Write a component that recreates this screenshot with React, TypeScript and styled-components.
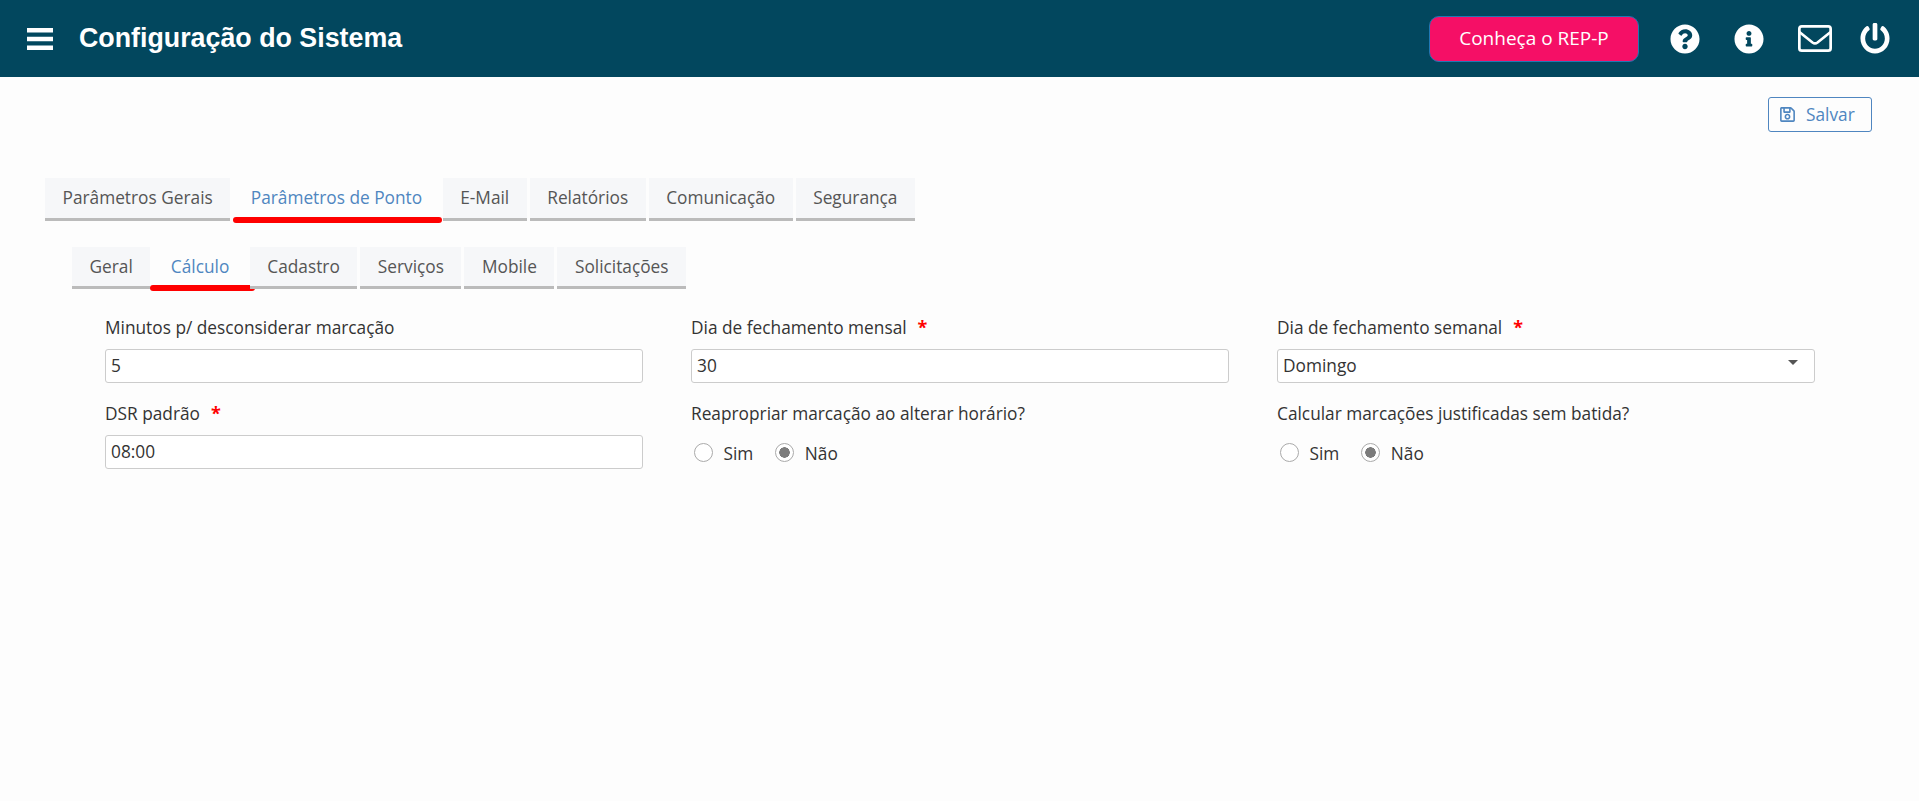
import styled, { createGlobalStyle } from "styled-components";
import { FaInfoCircle, FaPowerOff, FaQuestionCircle, FaRegSave } from "react-icons/fa";

const mainTabs = [
  "Parâmetros Gerais",
  "Parâmetros de Ponto",
  "E-Mail",
  "Relatórios",
  "Comunicação",
  "Segurança",
];

const subTabs = ["Geral", "Cálculo", "Cadastro", "Serviços", "Mobile", "Solicitações"];

const GlobalStyle = createGlobalStyle`
  html, body {
    margin: 0;
    height: 100%;
    overflow: hidden;
    background: #fdfdfd;
    font-family: "Open Sans", "Liberation Sans", sans-serif;
    font-size: 17.3px;
    color: #333;
  }
`;

const Header = styled.header`
  height: 77px;
  display: flex;
  align-items: center;
  padding: 0 29px 0 27px;
  background: #02475e;
  color: #fff;
`;

const MenuIcon = styled.svg`
  width: 26px;
  height: 22px;
  margin-right: 26px;
  fill: #fff;
`;

const Title = styled.h1`
  flex: 1;
  margin: 0;
  font-family: "Liberation Sans", Arial, sans-serif;
  font-size: 26.8px;
  font-weight: 700;
`;

const PromoButton = styled.button`
  width: 210px;
  height: 46px;
  margin-right: 31px;
  padding: 0 0 2px;
  border: 1.5px solid #1f78b4;
  border-radius: 10px;
  background: #f50f66;
  color: #fff;
  font-family: inherit;
  font-size: 19px;
`;

const Icons = styled.div`
  display: flex;
  align-items: center;
  gap: 34px;
  font-size: 30px;

  svg {
    display: block;
  }
`;

const MailIcon = styled.svg`
  width: 34px;
  height: 27px;
  margin-top: -1px;
  fill: none;
  stroke: #fff;
  stroke-width: 2.7;
  stroke-linejoin: round;
  stroke-linecap: round;
`;

const Power = styled(FaPowerOff).attrs({ preserveAspectRatio: "none" })`
  margin: -1px 0 0 -6px;
  width: 30px;
  height: 31px;
`;

const Toolbar = styled.div`
  display: flex;
  justify-content: flex-end;
  padding: 20px 47px 0 0;
`;

const SaveButton = styled.button`
  box-sizing: border-box;
  width: 104px;
  height: 35px;
  display: flex;
  align-items: center;
  gap: 11px;
  padding: 0 0 0 11px;
  border: 1px solid #4f86c0;
  border-radius: 3px;
  background: transparent;
  color: #4f86c0;
  font-family: inherit;
  font-size: 17.3px;

  svg {
    width: 15px;
    height: 17px;
  }
`;

const TabBar = styled.nav<{ $sub?: boolean }>`
  display: flex;
  gap: 3px;
  margin: ${(p) => (p.$sub ? "26px 0 0 72px" : "46px 0 0 45px")};
`;

const Tab = styled.div<{ $active?: boolean; $sub?: boolean }>`
  position: relative;
  box-sizing: border-box;
  height: ${(p) => (p.$sub ? 42 : 43)}px;
  padding: 0 17.5px 1px;
  display: flex;
  align-items: center;
  background: ${(p) => (p.$active ? "transparent" : "#f6f7f9")};
  border-bottom: 3px solid ${(p) => (p.$active ? "transparent" : "#bbb")};
  color: ${(p) => (p.$active ? "#4f86c0" : "#555")};

  ${(p) =>
    p.$active &&
    `
    &::after {
      content: "";
      position: absolute;
      left: ${p.$sub ? -3 : 0}px;
      right: ${p.$sub ? -8 : -2}px;
      bottom: -5px;
      height: 6px;
      border-radius: 3px;
      background: #f00;
    }
  `}
`;

const FormGrid = styled.section`
  display: grid;
  grid-template-columns: repeat(3, 538px);
  column-gap: 48px;
  row-gap: 19px;
  margin: 27px 0 0 105px;
`;

const Field = styled.div`
  display: flex;
  flex-direction: column;
  gap: 9px;
`;

const Label = styled.label`
  height: 24px;
  line-height: 23px;
  color: #333;
`;

const Required = styled.span`
  margin-left: 11px;
  color: #f00;
  font-weight: 700;
  font-size: 18px;
`;

const TextInput = styled.input`
  box-sizing: border-box;
  width: 100%;
  height: 34px;
  padding: 0 0 2px 5px;
  border: 1px solid #ccc;
  border-radius: 3px;
  background: #fff;
  color: #333;
  font-family: inherit;
  font-size: 17.3px;
  outline: none;
`;

const SelectWrap = styled.div`
  position: relative;

  &::after {
    content: "";
    position: absolute;
    top: 11px;
    right: 17px;
    border-style: solid;
    border-width: 5px 5px 0;
    border-color: #555 transparent transparent;
  }
`;

const Select = styled.select`
  appearance: none;
  box-sizing: border-box;
  width: 100%;
  height: 34px;
  padding: 0 0 2px 5px;
  border: 1px solid #ccc;
  border-radius: 3px;
  background: #fff;
  color: #333;
  font-family: inherit;
  font-size: 17.3px;
  outline: none;
`;

const RadioRow = styled.div`
  height: 34px;
  display: flex;
  align-items: center;
  gap: 22px;
  padding-left: 3px;
`;

const RadioOption = styled.label`
  display: flex;
  align-items: center;
  gap: 10.5px;
  padding-top: 2px;
`;

const Radio = styled.input.attrs({ type: "radio" })`
  appearance: none;
  width: 19px;
  height: 19px;
  margin: 0 0 2px;
  border: 1px solid #aaa;
  border-radius: 50%;
  background: #fff;

  &:checked {
    background: radial-gradient(circle, #7c7c7c 0 5px, #fff 5.5px);
  }
`;

function YesNo({ name }: { name: string }) {
  return (
    <RadioRow>
      <RadioOption>
        <Radio name={name} />
        Sim
      </RadioOption>
      <RadioOption>
        <Radio name={name} defaultChecked />
        Não
      </RadioOption>
    </RadioRow>
  );
}

function App() {
  return (
    <>
      <GlobalStyle />
      <Header>
        <MenuIcon viewBox="0 0 26 22">
          <rect y="0" width="26" height="4.5" />
          <rect y="8.75" width="26" height="4.5" />
          <rect y="17.5" width="26" height="4.5" />
        </MenuIcon>
        <Title>Configuração do Sistema</Title>
        <PromoButton>Conheça o REP-P</PromoButton>
        <Icons>
          <FaQuestionCircle />
          <FaInfoCircle />
          <MailIcon viewBox="0 0 34 27">
            <rect x="1.35" y="1.35" width="31.3" height="24.3" rx="2.5" />
            <path d="M2 7.5 14.5 17.5Q17 19.3 19.5 17.5L32 7.5" />
          </MailIcon>
          <Power />
        </Icons>
      </Header>

      <Toolbar>
        <SaveButton>
          <FaRegSave />
          Salvar
        </SaveButton>
      </Toolbar>

      <TabBar>
        {mainTabs.map((tab) => (
          <Tab key={tab} $active={tab === "Parâmetros de Ponto"}>
            {tab}
          </Tab>
        ))}
      </TabBar>

      <TabBar $sub>
        {subTabs.map((tab) => (
          <Tab key={tab} $sub $active={tab === "Cálculo"}>
            {tab}
          </Tab>
        ))}
      </TabBar>

      <FormGrid>
        <Field>
          <Label>Minutos p/ desconsiderar marcação</Label>
          <TextInput defaultValue="5" />
        </Field>
        <Field>
          <Label>
            Dia de fechamento mensal<Required>*</Required>
          </Label>
          <TextInput defaultValue="30" />
        </Field>
        <Field>
          <Label>
            Dia de fechamento semanal<Required>*</Required>
          </Label>
          <SelectWrap>
            <Select defaultValue="Domingo">
              <option>Domingo</option>
              <option>Segunda</option>
            </Select>
          </SelectWrap>
        </Field>
        <Field>
          <Label>
            DSR padrão<Required>*</Required>
          </Label>
          <TextInput defaultValue="08:00" />
        </Field>
        <Field>
          <Label>Reapropriar marcação ao alterar horário?</Label>
          <YesNo name="reapropriar" />
        </Field>
        <Field>
          <Label>Calcular marcações justificadas sem batida?</Label>
          <YesNo name="justificadas" />
        </Field>
      </FormGrid>
    </>
  );
}

export default App;
